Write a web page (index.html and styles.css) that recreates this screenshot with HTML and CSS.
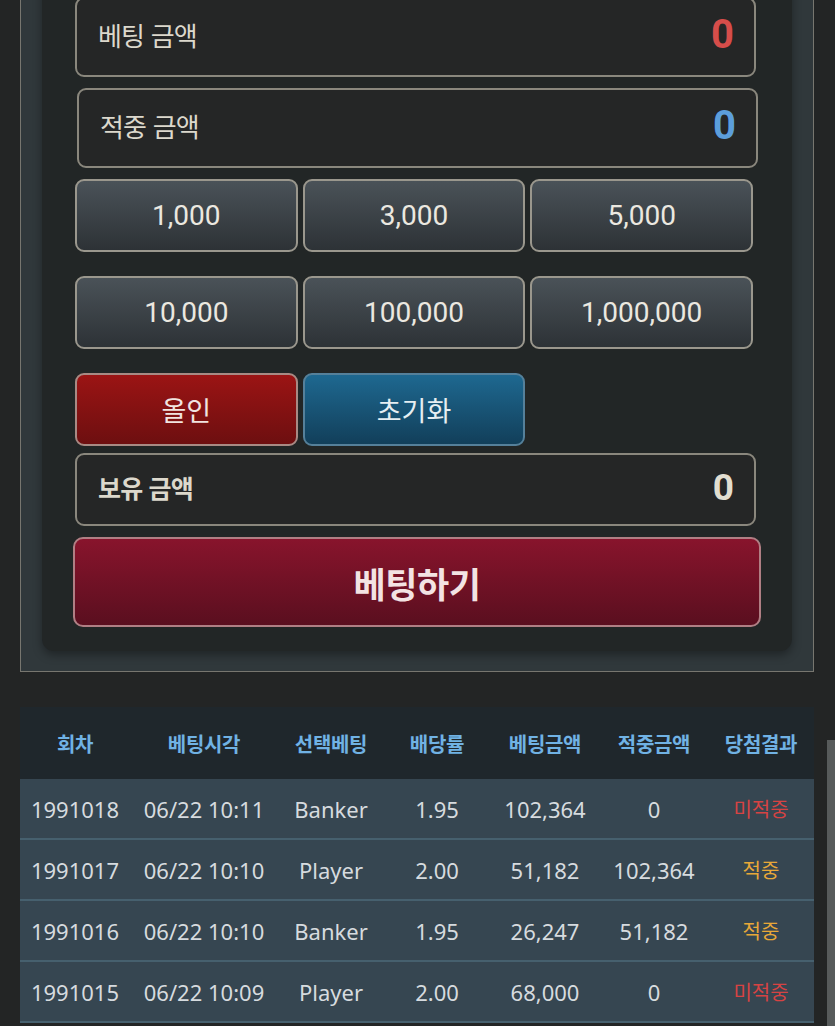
FILE: index.html
```html
<!DOCTYPE html>
<html lang="ko">
<head>
<meta charset="utf-8">
<title>베팅</title>
<link rel="stylesheet" href="styles.css">
</head>
<body>
<div class="panel">
  <div class="card">
    <div class="box box-tall">
      <span class="box-label">베팅 금액</span>
      <span class="box-value red">0</span>
    </div>
    <div class="box box-tall box-shift">
      <span class="box-label">적중 금액</span>
      <span class="box-value blue">0</span>
    </div>
    <div class="chips">
      <button class="chip">1,000</button>
      <button class="chip">3,000</button>
      <button class="chip">5,000</button>
      <button class="chip">10,000</button>
      <button class="chip">100,000</button>
      <button class="chip">1,000,000</button>
      <button class="chip chip-red">올인</button>
      <button class="chip chip-blue">초기화</button>
    </div>
    <div class="box box-hold">
      <span class="box-label bold">보유 금액</span>
      <span class="box-value light">0</span>
    </div>
    <button class="bet-btn">베팅하기</button>
  </div>
</div>

<table class="history">
  <colgroup>
    <col class="c1"><col class="c2"><col class="c3"><col class="c4"><col class="c5"><col class="c6"><col class="c7">
  </colgroup>
  <thead>
    <tr><th>회차</th><th>베팅시각</th><th>선택베팅</th><th>배당률</th><th>베팅금액</th><th>적중금액</th><th>당첨결과</th></tr>
  </thead>
  <tbody>
    <tr><td>1991018</td><td>06/22 10:11</td><td>Banker</td><td>1.95</td><td>102,364</td><td>0</td><td class="res lose">미적중</td></tr>
    <tr><td>1991017</td><td>06/22 10:10</td><td>Player</td><td>2.00</td><td>51,182</td><td>102,364</td><td class="res win">적중</td></tr>
    <tr><td>1991016</td><td>06/22 10:10</td><td>Banker</td><td>1.95</td><td>26,247</td><td>51,182</td><td class="res win">적중</td></tr>
    <tr><td>1991015</td><td>06/22 10:09</td><td>Player</td><td>2.00</td><td>68,000</td><td>0</td><td class="res lose">미적중</td></tr>
  </tbody>
</table>
<div class="scroll-thumb"></div>
</body>
</html>
```

FILE: styles.css
```css
html, body {
  margin: 0;
  padding: 0;
  background: #232525;
  font-family: "Noto Sans CJK KR", "Noto Sans", sans-serif;
  overflow: hidden;
}

.panel {
  box-sizing: border-box;
  width: 794px;
  margin: -44px 0 0 20px;
  padding: 20px 20px 20px 21px;
  background: #30383b;
  border: 1px solid #77766f;
}

.card {
  box-sizing: border-box;
  width: 750px;
  padding: 20px 36px 24px 33px;
  background: #222626;
  border-radius: 12px;
  box-shadow: 0 4px 10px rgba(0, 0, 0, 0.35);
  display: flex;
  flex-direction: column;
}

.box {
  box-sizing: border-box;
  display: flex;
  align-items: center;
  justify-content: space-between;
  padding: 0 20px 4px 21px;
  background: #252626;
  border: 2px solid #8a877d;
  border-radius: 9px;
}

.box-tall { height: 80px; }
.box-shift { margin: 11px -2px 0 2px; }
.box-hold { height: 73px; margin-top: 7px; }

.box-label {
  font-size: 26px;
  line-height: 1;
  color: #dcd8cc;
  letter-spacing: -0.8px;
}
.box-label.bold { font-weight: 700; font-size: 25px; }

.box-value {
  font-family: Roboto, "Noto Sans", sans-serif;
  font-size: 40px;
  font-weight: 700;
  line-height: 1;
}
.box-value.red { color: #d64d4a; }
.box-value.blue { color: #5c9edb; }
.box-value.light { color: #e2ded0; font-size: 37px; }

.chips {
  display: grid;
  grid-template-columns: repeat(3, 1fr);
  grid-auto-rows: 73px;
  column-gap: 5px;
  row-gap: 24px;
  margin: 11px 3px 0 0;
}

.chip {
  box-sizing: border-box;
  border: 2px solid #9a978d;
  border-radius: 9px;
  background: linear-gradient(#4a5258, #2d3236);
  color: #ebe8e0;
  font-family: Roboto, "Noto Sans CJK KR", sans-serif;
  font-size: 28px;
  padding: 0;
  cursor: pointer;
}

.chip-red {
  background: linear-gradient(#9b1414, #6d0f10);
  border-color: #a88a84;
  font-family: "Noto Sans CJK KR", sans-serif;
  font-size: 27px;
  color: #f1e4e0;
}

.chip-blue {
  background: linear-gradient(#1e6890, #123f5a);
  border-color: #55809a;
  font-family: "Noto Sans CJK KR", sans-serif;
  font-size: 27px;
  color: #e6eef2;
}

.bet-btn {
  box-sizing: border-box;
  height: 90px;
  margin: 11px -5px 0 -2px;
  border: 2px solid #b07f84;
  border-radius: 10px;
  background: linear-gradient(#88142c, #5a0f1f);
  color: #f3e3e3;
  font-family: "Noto Sans CJK KR", sans-serif;
  font-size: 35px;
  font-weight: 700;
  letter-spacing: -0.5px;
  cursor: pointer;
}

.history {
  width: 794px;
  margin: 35px 0 0 20px;
  border-collapse: collapse;
  table-layout: fixed;
}

.c1 { width: 110px; }
.c2 { width: 148px; }
.c3 { width: 106px; }
.c4 { width: 106px; }
.c5 { width: 110px; }
.c6 { width: 108px; }
.c7 { width: 106px; }

.history th {
  height: 72px;
  padding: 0;
  background: #1f272c;
  color: #70b2e4;
  font-size: 20px;
  font-weight: 700;
  text-align: center;
  letter-spacing: -0.3px;
}

.history td {
  height: 59px;
  padding: 0;
  background: #364651;
  border-bottom: 2px solid #46606e;
  color: #d6dbdf;
  font-family: "Noto Sans", "Noto Sans CJK KR", sans-serif;
  font-size: 22px;
  text-align: center;
  white-space: nowrap;
}

.history td.res {
  font-family: "Noto Sans CJK KR", sans-serif;
  font-size: 20px;
}
.history td.lose { color: #d64343; }
.history td.win { color: #e8a838; }

.scroll-thumb {
  position: absolute;
  left: 827px;
  top: 740px;
  width: 8px;
  height: 300px;
  background: #575b5b;
}
```
